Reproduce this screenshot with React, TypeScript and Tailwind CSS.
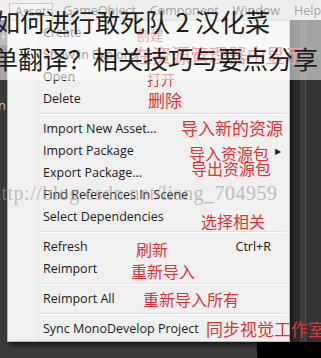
import React from "react";

type Row =
  | { sep: true }
  | {
      sep?: false;
      label: string;
      note?: string;
      noteClass?: string;
      shortcut?: string;
      arrow?: boolean;
    };

const rows: Row[] = [
  { label: "Create", note: "创建", noteClass: "left-[128px] text-[14px] translate-y-[1px]" },
  { label: "Show in Explorer", note: "在资源管理器中显示", noteClass: "left-[125px] text-[19px]" },
  { label: "Open", note: "打开", noteClass: "left-[139px] text-[14px] translate-y-[2px]" },
  { label: "Delete", note: "删除", noteClass: "left-[140px] text-[17px] translate-y-[1px]" },
  { sep: true },
  { label: "Import New Asset...", note: "导入新的资源", noteClass: "left-[173px] text-[17px] -translate-y-[1px]" },
  { label: "Import Package", note: "导入资源包", noteClass: "left-[181px] text-[16px] translate-y-[2px]", arrow: true },
  { label: "Export Package...", note: "导出资源包", noteClass: "left-[183px] text-[16px] -translate-y-[5px]" },
  { label: "Find References In Scene" },
  { label: "Select Dependencies", note: "选择相关", noteClass: "left-[193px] text-[16px] translate-y-[4px]" },
  { sep: true },
  { label: "Refresh", note: "刷新", noteClass: "left-[128px] text-[16px] translate-y-[2px]", shortcut: "Ctrl+R" },
  { label: "Reimport", note: "重新导入", noteClass: "left-[123px] text-[16px] translate-y-[2px]" },
  { sep: true },
  { label: "Reimport All", note: "重新导入所有", noteClass: "left-[135px] text-[16px]" },
  { sep: true },
  { label: "Sync MonoDevelop Project", note: "同步视觉工作室", noteClass: "left-[198px] text-[17px]" },
];

const cjk = "font-['Noto_Sans_CJK_SC',sans-serif]";

export default function App() {
  return (
    <div className="relative w-[321px] h-[358px] overflow-hidden bg-[#3a3a3a] font-['Open_Sans',sans-serif]">
      {/* menu bar */}
      <div className="h-[20px] bg-[#d9d9d9] flex items-end text-[12.5px] text-[#2e2e2e] leading-none">
        <div className="ml-[9px] w-[48px] h-[17px] border border-b-0 border-[#8c8c8c] bg-[#e6e6e6] pl-[5px] pt-[2px]">
          Assets
        </div>
        <div className="flex gap-[14px] pl-[10px] pb-[3px]">
          <span>GameObject</span>
          <span>Component</span>
          <span>Window</span>
          <span>Help</span>
        </div>
      </div>

      <div className="flex h-[322px]">
        {/* left strip */}
        <div className="w-[7px] flex flex-col">
          <div className="mt-[9px] h-[16px] bg-[#6a6a6a] text-[9px] leading-[16px] text-white text-center">+</div>
          <div className="mt-[54px] text-[13px] text-[#c9c9c9] leading-none -ml-[2px]">n</div>
        </div>

        {/* context menu */}
        <div className="relative w-[283px] bg-[#f0f0f0] border border-[#b9b9b9] shadow-[2px_3px_4px_rgba(0,0,0,0.6)] py-[1px] text-[12.5px] text-[#1b1b1b]">
          <div className="absolute left-[30px] inset-y-0 w-[2px] border-l border-[#e2e3e3] border-r-white" />
          {rows.map((r, i) =>
            r.sep ? (
              <div key={i} className="h-[8px] flex items-center pl-[32px] pr-[3px]">
                <div className="w-full h-[2px] border-t border-[#e0e0e0] border-b border-b-white" />
              </div>
            ) : (
              <div key={i} className="relative h-[22px] flex items-center pl-[35px] pr-[18px]">
                <span className="whitespace-nowrap">{r.label}</span>
                {r.shortcut && <span className="ml-auto">{r.shortcut}</span>}
                {r.arrow && (
                  <span className="absolute right-[8px] text-[8px] text-[#1b1b1b]">▶</span>
                )}
                {r.note && (
                  <span
                    className={`absolute inset-y-0 flex items-center whitespace-nowrap text-[#d83636] ${cjk} ${r.noteClass}`}
                  >
                    {r.note}
                  </span>
                )}
              </div>
            )
          )}
        </div>

        {/* right panel */}
        <div className="flex-1 flex">
          <div className="w-[10px] bg-[#2c2c2c]" />
          <div className="w-[6px] bg-[#3b3b3b] border-r border-[#505050]" />
          <div className="flex-1 bg-[#333333]" />
        </div>
      </div>

      <div className="flex h-[16px]">
        <div className="w-[257px] bg-[#3a3a3a]" />
        <div className="flex-1 bg-black" />
      </div>

      {/* watermark */}
      <div className="absolute left-[-9px] top-[178px] whitespace-nowrap font-['Liberation_Serif',serif] text-[20px] text-[#9a9a9a]/60 tracking-[0.5px]">
        http://blog.csdn.net/liang_704959
      </div>

      {/* title overlay */}
      <div className="absolute inset-x-0 top-0 h-[80px] bg-white/55" />
      <div className={`absolute left-0 top-[3px] text-[25px] leading-[37px] text-[#1c1c1c] whitespace-nowrap ${cjk}`}>
        <div className="-ml-[5px]">如何进行敢死队 2 汉化菜</div>
        <div className="-ml-[7px]">单翻译？相关技巧与要点分享</div>
      </div>
    </div>
  );
}
